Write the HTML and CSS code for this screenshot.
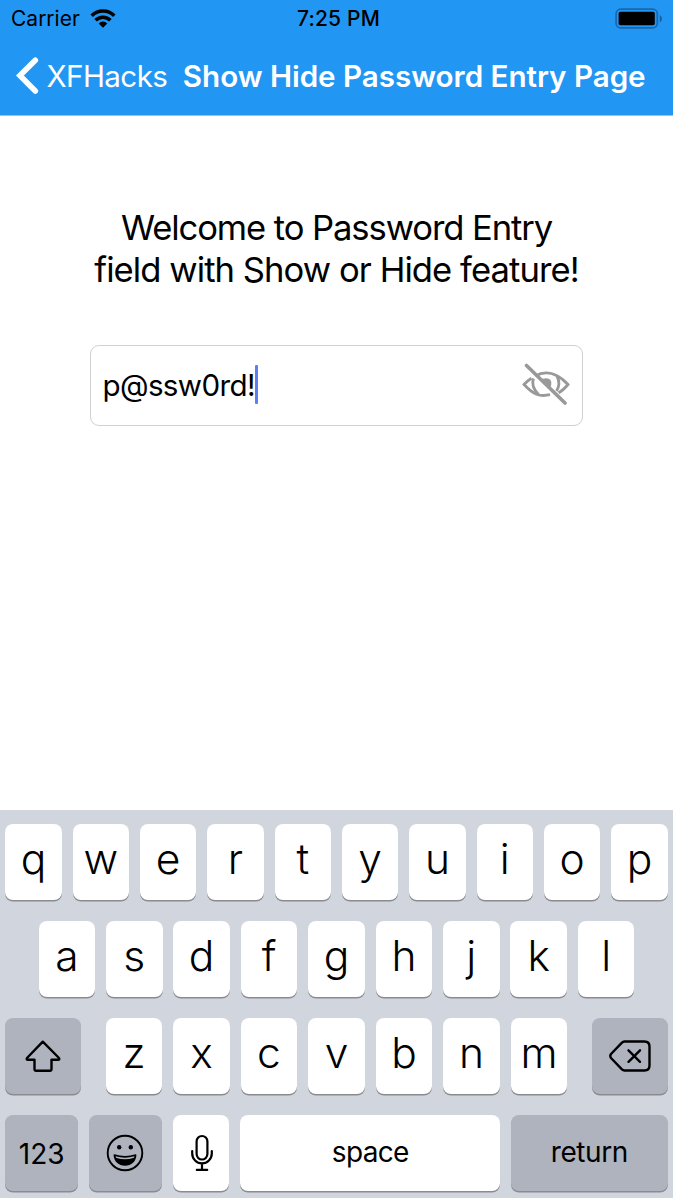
FILE: index.html
```html
<!DOCTYPE html>
<html lang="en">
<head>
<meta charset="utf-8">
<title>Show Hide Password Entry Page</title>
<link rel="stylesheet" href="styles.css">
</head>
<body>
<div class="screen">
  <header class="top">
    <div class="status">
      <div class="carrier"><span class="carrier-name">Carrier</span>
        <svg class="wifi" width="26" height="19" viewBox="0 0 26 19"><g fill="none" stroke="#000" stroke-width="3.6"><path d="M1.700 6.700a16 16 0 0 1 22.600 0"/><path d="M5.600 11.300a10.500 10.500 0 0 1 14.800 0"/></g><path d="M13 18.700 8.700 14.400a6 6 0 0 1 8.600 0z"/></svg>
      </div>
      <span class="time">7:25 PM</span>
      <svg class="battery" width="48" height="22" viewBox="0 0 48 22"><rect x="1.100" y="1.200" width="41.200" height="18.600" rx="4.500" fill="none" stroke="#1a68ab" stroke-width="1.700"/><rect x="3.600" y="3.800" width="36.200" height="13.400" rx="1.800"/><path d="M44.800 7.300c2.800 1 2.800 6 0 7z" fill="#1a5f9c"/></svg>
    </div>
    <nav class="nav">
      <svg class="back" width="25" height="40" viewBox="0 0 25 40"><path d="M21.300 4.200 5.900 19.600l15.400 15.400" fill="none" stroke="#fff" stroke-width="5.600" stroke-linecap="round" stroke-linejoin="miter"/></svg>
      <span class="back-label">XFHacks</span>
      <h1 class="title">Show Hide Password Entry Page</h1>
    </nav>
  </header>
  <main class="content">
    <p class="welcome"><span class="line1">Welcome to Password Entry</span><br><span class="line2">field with Show or Hide feature!</span></p>
    <div class="entry">
      <span class="value">p@ssw0rd!</span><span class="caret"></span>
      <svg class="eye" width="50" height="46" viewBox="0 0 50 46"><g fill="none" stroke="#999" stroke-width="2.800"><path d="M15 12.700C21 9 29 8.900 35 12.200Q41 15 47 21.500Q42 27.500 37.500 29.700M10.500 15.200Q6 18 3 21.500Q10 29 15.500 31.200Q21 33.500 29 31.700"/><path d="M12.500 15.500Q9.500 23 17.500 31.500M36 13Q40 21 35.500 28"/></g><path d="M21 16q7-2 9 2 1 4-1 6.500z" fill="#999"/><path d="M5.500 2.500 44 40" stroke="#999" stroke-width="3.600" stroke-linecap="round"/></svg>
    </div>
  </main>
  <section class="keyboard">
    <div class="row"><span class="key">q</span><span class="key">w</span><span class="key">e</span><span class="key">r</span><span class="key">t</span><span class="key">y</span><span class="key">u</span><span class="key">i</span><span class="key">o</span><span class="key">p</span></div>
    <div class="row middle"><span class="key">a</span><span class="key">s</span><span class="key">d</span><span class="key">f</span><span class="key">g</span><span class="key">h</span><span class="key">j</span><span class="key">k</span><span class="key">l</span></div>
    <div class="row lower">
      <span class="key dark"><svg width="36" height="32" viewBox="0 0 36 32"><path d="M17.800 1.700 34 18Q35 19.700 33 19.700H26.500V29Q26.500 30.700 24.800 30.700H11.200Q9.500 30.700 9.500 29V19.700H3Q1 19.700 2 18Z" fill="none" stroke="#000" stroke-width="2.400" stroke-linejoin="round"/></svg></span>
      <div class="letters"><span class="key">z</span><span class="key">x</span><span class="key">c</span><span class="key">v</span><span class="key">b</span><span class="key">n</span><span class="key">m</span></div>
      <span class="key dark"><svg width="42" height="32" viewBox="0 0 42 32"><g fill="none" stroke="#000" stroke-width="2.400" stroke-linecap="round" stroke-linejoin="round"><path d="M15.500 1.500H35.500Q40.500 1.500 40.500 6.500V25.500Q40.500 30.500 35.500 30.500H15.500Q14 30.500 12.700 29.200L2 18Q.6 16 2 14L12.700 2.800Q14 1.500 15.500 1.500Z"/><path d="m19.500 10.300 11.500 11.500m0-11.500L19.500 21.800"/></g></svg></span>
    </div>
    <div class="row bottom">
      <span class="key dark word num">123</span>
      <span class="key dark"><svg width="38" height="38" viewBox="0 0 38 38"><circle cx="19" cy="19" r="17.300" fill="none" stroke="#000" stroke-width="1.900"/><circle cx="13.200" cy="13.200" r="2.200"/><circle cx="24.800" cy="13.200" r="2.200"/><path d="M8.300 21Q19 24.300 29.700 21C29.500 27 25 31 19 31S8.500 27 8.300 21Z" stroke="#000" stroke-width="1.400" stroke-linejoin="round"/><path d="M9.600 22.300Q19 25 28.400 22.300L28 23.800Q19 26.800 10 23.800Z" fill="#aeb3be"/></svg></span>
      <span class="key mic"><svg width="24" height="38" viewBox="0 0 24 38"><g fill="none" stroke="#000" stroke-width="2.200" stroke-linecap="round"><rect x="6.600" y="2" width="10.800" height="23.500" rx="5.400"/><path d="M2.200 17V19.500a9.800 9.800 0 0 0 19.600 0V17M12 29.500V35.700M6.800 35.900H17.200"/></g></svg></span>
      <span class="key word space">space</span>
      <span class="key dark word return">return</span>
    </div>
  </section>
</div>
</body>
</html>
```

FILE: styles.css
```css
* { box-sizing: border-box; }
body { margin: 0; font-family: Inter, "Liberation Sans", sans-serif; color: #000; background: #fff; }
svg { display: block; flex: none; }
.screen { width: 673px; height: 1198px; display: flex; flex-direction: column; overflow: hidden; white-space: nowrap; }
.top { height: 116px; background: #2296f3; border-bottom: 1px solid #a5c2dc; flex: none; }
.status { height: 37px; display: grid; grid-template-columns: 1fr auto 1fr; align-items: center; padding: 0 10px 0 11px; font-size: 21px; }
.carrier { display: flex; align-items: center; gap: 10px; }
.carrier-name { letter-spacing: 0; }
.time { font-weight: 500; letter-spacing: 0.2px; margin-left: 3px; }
.battery { justify-self: end; }
.nav { height: 77px; display: flex; align-items: center; padding-left: 14px; color: #fff; font-size: 29.600px; }
.back-label { margin-left: 7.500px; letter-spacing: -0.600px; }
.title { margin: 0 0 0 15.500px; font-size: 29.600px; font-weight: 600; letter-spacing: -0.030px; }
.content { flex: 1; padding: 90px 90px 0; }
.welcome { margin: 0; text-align: center; font-size: 34.600px; line-height: 42px; }
.line1 { letter-spacing: -1.080px; }
.line2 { letter-spacing: -0.930px; }
.entry { margin-top: 55px; width: 493px; height: 81px; border: 1px solid #d0d0d0; border-radius: 9px; display: flex; align-items: center; padding: 0 11px 2px 11.500px; font-size: 29.600px; }
.value { letter-spacing: -0.650px; }
.caret { width: 3.500px; height: 39px; border-radius: 1px; background: #5a80f5; }
.eye { margin-left: auto; margin-top: 3px; }
.keyboard { height: 388px; flex: none; background: #d1d5dd; padding: 14px 5.300px 0; display: flex; flex-direction: column; gap: 21.300px; }
.row { height: 75.800px; display: grid; grid-template-columns: repeat(10, 1fr); gap: 10.900px; flex: none; }
.middle { grid-template-columns: repeat(9, 1fr); padding: 0 33.300px; }
.lower { grid-template-columns: 75.400px 1fr 75.400px; gap: 25px; }
.letters { display: grid; grid-template-columns: repeat(7, 1fr); gap: 10.900px; }
.bottom { grid-template-columns: 72.700px 73px 56.700px 1fr 156.700px; }
.key { display: flex; align-items: center; justify-content: center; padding-bottom: 7px; border-radius: 8px; background: #fff; box-shadow: 0 1.600px 0 #898b8f; font-size: 42.500px; font-weight: 350; }
.dark { background: #aeb3be; padding-bottom: 0; }
.mic { padding-bottom: 0; padding-left: 1px; }
.word { font-size: 28px; font-weight: 400; padding-bottom: 2px; }
.space { letter-spacing: -0.700px; }
.return { letter-spacing: -0.400px; }
.num { padding-bottom: 0; padding-top: 2px; }
```
